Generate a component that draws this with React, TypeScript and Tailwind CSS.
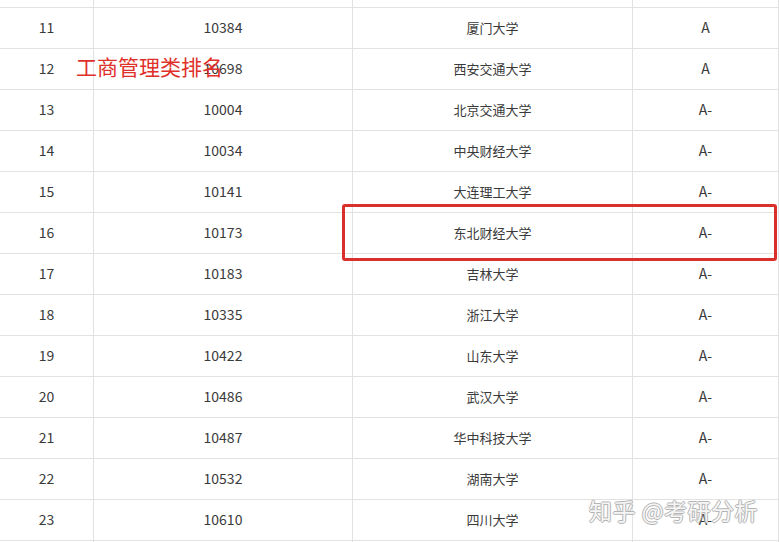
import React from "react";

const rows: [string, string, string, string][] = [
  ["", "", "", ""],
  ["11", "10384", "厦门大学", "A"],
  ["12", "10698", "西安交通大学", "A"],
  ["13", "10004", "北京交通大学", "A-"],
  ["14", "10034", "中央财经大学", "A-"],
  ["15", "10141", "大连理工大学", "A-"],
  ["16", "10173", "东北财经大学", "A-"],
  ["17", "10183", "吉林大学", "A-"],
  ["18", "10335", "浙江大学", "A-"],
  ["19", "10422", "山东大学", "A-"],
  ["20", "10486", "武汉大学", "A-"],
  ["21", "10487", "华中科技大学", "A-"],
  ["22", "10532", "湖南大学", "A-"],
  ["23", "10610", "四川大学", "A-"],
  ["", "", "", ""],
];

export default function App() {
  const cell =
    "h-[41px] flex items-center justify-center pb-[1px] border-b border-r border-[#e2e2e2]";
  return (
    <div
      className="relative w-[779px] h-[542px] overflow-hidden bg-white text-[#3a3a3a]"
      style={{ fontFamily: '"Noto Sans CJK SC", "Noto Sans", sans-serif' }}
    >
      <div className="mt-[-33px] grid grid-cols-[94px_259px_280px_146px] text-[14px]">
        {rows.map((r, i) => (
          <React.Fragment key={i}>
            <div className={cell}>{r[0]}</div>
            <div className={cell}>{r[1]}</div>
            <div className={`${cell} text-[13px]`}>{r[2]}</div>
            <div className={cell}>{r[3]}</div>
          </React.Fragment>
        ))}
      </div>

      <div className="absolute left-[76px] top-[52px] text-[21px] leading-[28px] text-[#e0302a]">
        工商管理类排名
      </div>

      <div className="absolute left-[342px] top-[204px] w-[435px] h-[57px] rounded-[3px] border-[3px] border-[#d9302c]" />

      <div
        className="absolute left-[589px] top-[495px] text-[23px] leading-[30px] text-[#f4f4f4] tracking-[0.5px]"
        style={{
          textShadow:
            "1px 0 0 #a8a8a8, -1px 0 0 #a8a8a8, 0 1px 0 #a8a8a8, 0 -1px 0 #a8a8a8",
          opacity: 0.85,
        }}
      >
        知乎 @考研分析
      </div>
    </div>
  );
}
